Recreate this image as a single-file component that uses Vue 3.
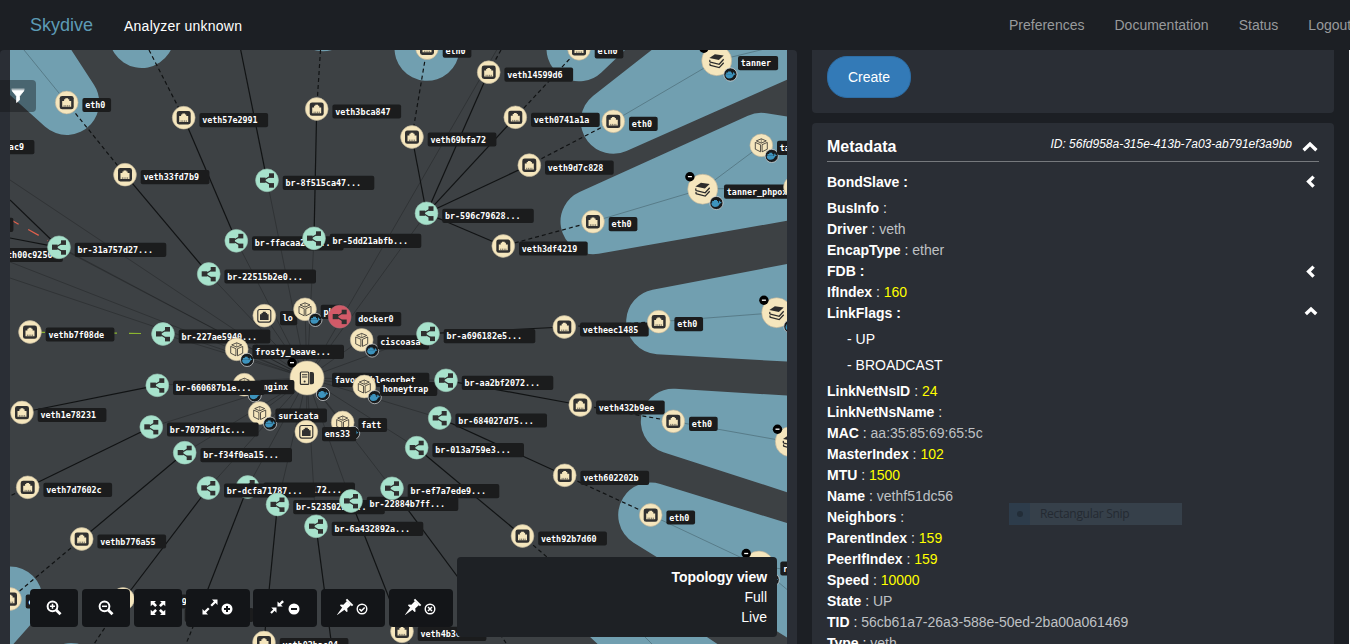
<script setup>
const bubbles = [
  { pts: '66.7,102.5 -20,-31 -90,-39' },
  { pts: '141.7,35.5 141.8,35' },
  { pts: '323,18.7 323.1,18' },
  { pts: '427,48.3 427.1,47' },
  { pts: '579,48.8 700,-66 640,-66' },
  { pts: '613.3,121.3 900,-6 800,-25' },
  { pts: '593,221.7 761.3,145.3 900,168' },
  { pts: '658.7,321.7 900,275.5 900,335.5' },
  { pts: '673.3,421.3 900,435 900,494.5' },
  { pts: '650.7,515 900,592 900,669' },
  { pts: '10,599 -80,700 -100,599' },
  { pts: '71,675.5 71.1,676' },
  { pts: '611,612 900,883 900,805' },
]

const host = [307, 378]
const faintTargets = [
  [59, 247.3], [267, 180.3], [236.3, 240.8], [208.7, 274], [314, 238.3], [426.5, 213.3], [428, 333.7],
  [446, 380.3], [439.7, 418], [416.7, 447.7], [392, 488.3], [351, 501], [316, 526.3], [277.5, 504.5],
  [247.7, 487], [208.3, 488], [184.7, 452.7], [151.3, 427], [157.3, 385.3], [163, 334], [496.7, 50],
  [10, 180], [10, 262], [10, 278], [47, 240], [264.3, 315.7], [305, 309], [361.3, 339.7], [364.3, 386.5],
  [342.7, 422.5], [306.3, 431.7], [259.7, 413], [244, 384.5], [236.7, 349.3],
]
const bubbleEdges = [
  [24, 50, 66.7, 102.5], [613.3, 121.3, 716.7, 60.7], [716.7, 60.7, 787, 43.5], [593, 221.7, 702.7, 189],
  [702.7, 189, 761.3, 145.3], [702.7, 189, 795, 187.5], [658.7, 321.7, 776.7, 312.7],
  [673.3, 421.3, 790, 442], [650.7, 515, 759, 566], [759, 566, 790, 570], [759, 566, 787, 589.5], [645, 637, 653, 645],
]
const solidEdges = [
  [125, 174.7, 208.7, 274], [183.7, 117.7, 236.3, 240.8], [240.7, 50, 267, 180.3], [316.7, 109, 314, 238.3],
  [412, 137, 426.5, 213.3], [488.7, 72, 426.5, 213.3], [515.3, 117.3, 426.5, 213.3], [529.3, 165, 426.5, 213.3],
  [503.3, 246, 426.5, 213.3], [428, 333.7, 564.3, 327], [446, 380.3, 580.3, 405], [439.7, 418, 564.7, 475.3],
  [416.7, 447.7, 522.5, 536], [392, 488.3, 500, 634], [351, 501, 402, 631], [316, 526.3, 331.5, 644],
  [277.5, 504.5, 264, 642], [247.7, 487, 199, 612], [208.3, 488, 124, 599], [184.7, 452.7, 81.7, 539],
  [151.3, 427, 27.7, 487.3], [157.3, 385.3, 22, 412.5], [10, 200, 59, 247.3], [10, 238, 59, 247.3],
]
const dashedEdges = [
  [66.7, 102.5, 125, 174.7], [149, 50, 183.7, 117.7], [320.5, 50, 316.7, 109], [427, 48, 412, 137],
  [501, 50, 488.7, 72], [579, 48.8, 515.3, 117.3], [613.3, 121.3, 529.3, 165], [593, 221.7, 503.3, 246],
  [564.3, 327, 658.7, 321.7], [580.3, 405, 673.3, 421.3], [564.7, 475.3, 650.7, 515], [81.7, 539, 10, 599],
  [27.7, 487.3, 10, 496], [522.5, 536, 611, 612], [124, 599, 94, 644], [199, 612, 186, 644],
  [500, 634, 506, 643], [402, 631, 410, 646],
]

const n = (kind, x, y, label, extra = {}) => ({ kind, x, y, label, dx: 15.7, dy: -4.6, ...extra })
const pod = (x, y, label) => n('cube', x, y, label, { docker: [10.4, 10.6] })
const ns = (x, y, label) => n('layers', x, y, label, { r: 15, dx: 21.3, dy: -4.6, docker: [13.7, 13.8], minus: [-12.8, -12.5] })

const nodes = [
  n('port', 66.7, 102.5, 'eth0'), n('port', 183.7, 117.7, 'veth57e2991'), n('port', 125, 174.7, 'veth33fd7b9'),
  n('port', -50, 144.7, 'veth81d2ac9'), n('port', -71, 222.3, 'vethc3a51d0'),
  n('port', 427, 48.1, 'eth0'), n('port', 488.7, 72.2, 'veth14599d6'), n('port', 316.7, 109, 'veth3bca847'),
  n('port', 412, 137, 'veth69bfa72'), n('port', 515.3, 117.3, 'veth0741a1a'), n('port', 529.3, 165.2, 'veth9d7c828'),
  n('bridge', 267, 180.3, 'br-8f515ca47...'), n('bridge', 426.5, 213.3, 'br-596c79628...'),
  n('port', 579, 48.8, 'eth0'), n('port', 613.3, 121.3, 'eth0'), ns(716.7, 60.7, 'tanner'),
  pod(761.3, 145.3, 'tanner_redis'), ns(702.7, 189.2, 'tanner_phpox'), n('cube', 795, 187, ''),
  n('port', 593, 221.7, 'eth0'), n('port', 503.3, 246, 'veth3df4219'),
  n('port', 564.3, 327, 'vetheec1485'), n('port', 658.7, 321.7, 'eth0'), ns(776.7, 312.7, 'heralding'),
  n('port', 580.3, 405, 'veth432b9ee'), n('port', 673.3, 421.3, 'eth0'), ns(790.3, 441.7, 'rdpy'),
  n('port', 564.7, 475.3, 'veth602202b'), n('port', 650.7, 515, 'eth0'), ns(759, 566, 'rdpy'),
  n('port', 522.5, 536, 'veth92b7d60'),
  n('port', -21.5, 252.5, 'veth00c9250'), n('bridge', 59, 247.3, 'br-31a757d27...'),
  n('bridge', 236.3, 240.8, 'br-ffacaa245...'), n('bridge', 208.7, 274, 'br-22515b2e0...'),
  n('bridge', 314, 238.3, 'br-5dd21abfb...'),
  n('port', 30, 332, 'vethb7f08de'), n('bridge', 163, 334, 'br-227ae5940...'),
  n('portline', 264.3, 315.7, 'lo'), pod(305, 309.3, 'pho'), n('bridge', 339.7, 316.7, 'docker0', { down: true }),
  pod(361.7, 339.9, 'ciscoasa'), n('bridge', 428, 333.7, 'br-a696182e5...'),
  pod(236.7, 349.3, 'frosty_beave...'),
  n('host', 307, 378, 'favourablesorbet', { r: 17, dx: 25, dy: -5.3, docker: [16, 16], minus: [-15, -15.3] }),
  pod(364.3, 386.5, 'honeytrap'), pod(244.3, 384.7, 'nginx'),
  n('bridge', 157.3, 385.3, 'br-660687b1e...'), n('port', 22, 412.5, 'veth1e78231'),
  pod(259.7, 413, 'suricata'), n('bridge', 446, 380.3, 'br-aa2bf2072...'),
  n('bridge', 151.3, 427, 'br-7073bdf1c...'), n('bridge', 439.7, 418, 'br-684027d75...'),
  n('bridge', 416.7, 447.7, 'br-013a759e3...'), pod(342.7, 422.5, 'fatt'), n('portline', 306.3, 431.7, 'ens33'),
  n('port', 27.7, 487.3, 'veth7d7602c'), n('bridge', 184.7, 452.7, 'br-f34f0ea15...'),
  n('bridge', 247.7, 487, 'br-40cb1e172...'), n('bridge', 208.3, 488, 'br-dcfa71787...'),
  n('bridge', 277.5, 504.5, 'br-523502b1c...', { dy: -4.4 }), n('bridge', 351, 501, 'br-22884b7ff...', { dy: -4.2 }),
  n('bridge', 392, 488.3, 'br-ef7a7ede9...', { dy: -4.2 }), n('bridge', 316, 526.3, 'br-6a432892a...'),
  n('port', 81.7, 539, 'vethb776a55'), n('port', 10, 599, 'eth0'), n('port', 123, 599, 'veth5e1a9nb'),
  n('port', 169, 612.5, 'veth8c02d1f'), n('port', 264, 642.5, 'veth02bac04'), n('port', 402, 631.3, 'veth4b3c9f1'),
]

const meta = [
  { k: 'BondSlave', group: 'left', tall: true },
  { k: 'BusInfo' },
  { k: 'Driver', v: 'veth' },
  { k: 'EncapType', v: 'ether' },
  { k: 'FDB', group: 'left' },
  { k: 'IfIndex', v: '160', num: true },
  { k: 'LinkFlags', group: 'up', items: ['UP', 'BROADCAST'] },
  { k: 'LinkNetNsID', v: '24', num: true },
  { k: 'LinkNetNsName' },
  { k: 'MAC', v: 'aa:35:85:69:65:5c' },
  { k: 'MasterIndex', v: '102', num: true },
  { k: 'MTU', v: '1500', num: true },
  { k: 'Name', v: 'vethf51dc56' },
  { k: 'Neighbors' },
  { k: 'ParentIndex', v: '159', num: true },
  { k: 'PeerIfIndex', v: '159', num: true },
  { k: 'Speed', v: '10000', num: true },
  { k: 'State', v: 'UP' },
  { k: 'TID', v: '56cb61a7-26a3-588e-50ed-2ba00a061469' },
  { k: 'Type', v: 'veth' },
]
const links = ['Preferences', 'Documentation', 'Status', 'Logout']
</script>

<template>
  <div class="app">
    <header class="navbar">
      <span class="brand">Skydive</span>
      <span class="analyzer">Analyzer unknown</span>
      <nav class="links"><a v-for="l in links" :key="l">{{ l }}</a></nav>
    </header>

    <main class="content">
      <section class="topology">
        <svg class="graph" width="777" height="594" viewBox="10 50 777 594">
          <defs>
            <g id="i-port">
              <rect x="-7" y="-6.6" width="14" height="13.4" rx="2.4" fill="#303030" />
              <path d="M-4.5 4.2V-1.6H-2.6V-3.2H-1.4V-4.2H1.4V-3.2H2.6V-1.6H4.5V4.2Z" fill="#f5e6bd" />
              <path d="M-2.6 4.2V2.6M-.9 4.2V2.6M.9 4.2V2.6M2.6 4.2V2.6" stroke="#303030" stroke-width=".6" />
            </g>
            <g id="i-portline">
              <rect x="-6.5" y="-6.2" width="13" height="12.6" rx="2" fill="none" stroke="#303030" stroke-width="1.1" />
              <path d="M-4.3 4.2V-1.4H-2.8V-2.8H-1.5V-4H1.5V-2.8H2.8V-1.4H4.3V4.2Z" fill="#303030" />
            </g>
            <g id="i-bridge">
              <path d="M5 -5L-3.5 0L5 5.2" fill="none" stroke="#303030" stroke-width="1.2" />
              <rect x="-7" y="-2.7" width="5.6" height="5.2" fill="#303030" />
              <rect x="2" y="-7" width="5" height="4.6" fill="#303030" />
              <rect x="2" y="2.8" width="5" height="4.6" fill="#303030" />
            </g>
            <g id="i-cube" fill="none" stroke="#3a3834" stroke-width=".85" stroke-linejoin="round">
              <path d="M0 -6.5L5 -4.4L0 -2.2L-5 -4.4Z" />
              <path d="M-6 -2.9L-.8 -.6V6.5L-6 3.9Z" />
              <path d="M6 -2.9L.8 -.6V6.5L6 3.9Z" />
              <path d="M0 -6.5V-2.2" stroke-width=".5" />
            </g>
            <g id="i-layers">
              <path d="M-7.3 -2.8L-1.8 -6.5L7 -5.2L2.2 -.8Z" fill="#2c2c2c" />
              <path d="M-6.8 -.8Q-7.4 1 -6.3 1.5L2.5 3.6L7 -1.5M-6.5 2.7Q-7.2 4.3 -6 4.8L2.5 6.9L7 2" fill="none" stroke="#2c2c2c" stroke-width="1.3" />
            </g>
            <g id="i-host">
              <rect x="-6.6" y="-6" width="8.4" height="12.4" rx="1" fill="none" stroke="#303030" stroke-width="1.2" />
              <path d="M-5 -3.3H.3M-5 -1H.3" stroke="#303030" stroke-width="1.1" />
              <circle cx="-2.4" cy="3.4" r="1" fill="#303030" />
              <path d="M3 -6H5Q7 -6 7 -4V4.5Q7 6.3 5 6.3H3Z" fill="#303030" />
            </g>
            <g id="i-docker">
              <circle r="6.6" fill="#171a1c" stroke="#dfe3e4" stroke-width=".7" />
              <path d="M-5 -.2H2.4Q2.2 -1.8 3.2 -2.6Q4 -2 3.9 -1Q4.9 -1.1 5.3 -.6Q4.7 .4 3.5 .4Q2.3 3.9 -1.6 3.9Q-5 3.9 -5 -.2Z" fill="#3d93bd" />
              <path d="M-4.2 -1.9H1.7V-.1H-4.2ZM-2.4 -3.1H.6V-1.9H-2.4Z" fill="#3d93bd" />
            </g>
          </defs>

          <g class="bubbles"><polygon v-for="(b, i) in bubbles" :key="i" :points="b.pts" /></g>
          <g class="faint">
            <line v-for="(t, i) in faintTargets" :key="i" :x1="host[0]" :y1="host[1]" :x2="t[0]" :y2="t[1]" />
          </g>
          <g class="inner">
            <line v-for="(e, i) in bubbleEdges" :key="i" :x1="e[0]" :y1="e[1]" :x2="e[2]" :y2="e[3]" />
          </g>
          <g class="solid">
            <line v-for="(e, i) in solidEdges" :key="i" :x1="e[0]" :y1="e[1]" :x2="e[2]" :y2="e[3]" />
          </g>
          <g class="dashed">
            <line v-for="(e, i) in dashedEdges" :key="i" :x1="e[0]" :y1="e[1]" :x2="e[2]" :y2="e[3]" />
          </g>
          <line class="alert" x1="12.5" y1="220.8" x2="48" y2="240.5" />
          <line class="active" x1="33" y1="332.3" x2="152" y2="333.6" />

          <g v-for="(d, i) in nodes" :key="i" :transform="`translate(${d.x} ${d.y})`">
            <circle :class="['disc', d.kind === 'bridge' ? 'green' : '', d.down ? 'red' : '']" :r="d.r || 11.4" />
            <use :href="'#i-' + d.kind" />
            <g v-if="d.minus" :transform="`translate(${d.minus[0]} ${d.minus[1]})`">
              <circle r="4.7" fill="#000" /><path d="M-2 0H2" stroke="#fff" stroke-width="1.3" />
            </g>
            <use v-if="d.docker" href="#i-docker" :x="d.docker[0]" :y="d.docker[1]" />
            <g v-if="d.label" :transform="`translate(${d.dx} ${d.dy})`">
              <rect class="tag" :width="d.label.length * 5.72 + 5.8" height="14.2" rx="2" />
              <text class="name" x="2.8" y="10.2">{{ d.label }}</text>
            </g>
          </g>
        </svg>

        <div class="filter">
          <svg width="14" height="15" viewBox="0 0 14 15"><path d="M.5 1.2H13.5M1 2.6H13L8.5 8.2V12L5.6 14.5V8.2Z" fill="#fff" stroke="#fff" stroke-width=".8" /></svg>
        </div>

        <div class="overlay">
          <div class="tools">
            <button><svg width="18" height="18" viewBox="0 0 18 18"><circle cx="7.5" cy="7.3" r="4.9" class="ring" /><path d="M11.2 11L15.5 15.3" class="thick" /><path d="M5 7.3H10M7.5 4.8V9.8" class="line" /></svg></button>
            <button><svg width="18" height="18" viewBox="0 0 18 18"><circle cx="7.5" cy="7.3" r="4.9" class="ring" /><path d="M11.2 11L15.5 15.3" class="thick" /><path d="M5 7.3H10" class="line" /></svg></button>
            <button><svg width="18" height="18" viewBox="0 0 18 18"><path d="M1.7 2H7L5.4 3.6L8 6.2L6.2 8L3.6 5.4L1.7 7.2ZM16.3 2V7.2L14.5 5.4L11.8 8L10 6.2L12.6 3.6L11 2ZM1.7 16V10.8L3.6 12.6L6.2 10L8 11.8L5.4 14.4L7 16ZM16.3 16H11L12.6 14.4L10 11.8L11.8 10L14.5 12.6L16.3 10.8Z" fill="#fff" /></svg></button>
            <button class="wide">
              <svg width="18" height="18" viewBox="0 0 18 18"><path d="M16.5 1.5V7L14.6 5.1L11 8.5L9.4 6.9L12.9 3.4L11 1.5ZM1.5 16.5V11L3.4 12.9L7 9.4L8.6 11L5.1 14.6L7 16.5Z" fill="#fff" /></svg>
              <svg width="12" height="12" viewBox="0 0 12 12"><circle cx="6" cy="6" r="5.5" fill="#fff" /><path d="M3 6H9M6 3V9" stroke="#131518" stroke-width="2" /></svg>
            </button>
            <button class="wide">
              <svg width="18" height="18" viewBox="0 0 18 18"><path d="M9.5 8.5V3.4L11.4 5.3L14.2 2.2L16 4L12.9 6.8L14.8 8.5ZM8.5 9.5V14.7L6.6 12.8L3.8 15.8L2.2 14.2L5.2 11.4L3.3 9.5Z" fill="#fff" /></svg>
              <svg width="12" height="12" viewBox="0 0 12 12"><circle cx="6" cy="6" r="5.5" fill="#fff" /><path d="M3 6H9" stroke="#131518" stroke-width="2" /></svg>
            </button>
            <button v-for="mark in ['M3.4 6L5.3 7.9L8.7 4.4', 'M4 4L8 8M8 4L4 8']" :key="mark" class="wide">
              <svg width="18" height="18" viewBox="0 0 18 18">
                <path d="M10.4 1.4L16.6 7.6" stroke="#fff" stroke-width="2" />
                <path d="M11 3L15 7L11.2 10.6L11.6 13.4L10.6 14L4 7.4L4.6 6.4L7.4 6.8Z" fill="#fff" />
                <path d="M6.4 9.2L8.8 11.6L1.2 17L1 16.8Z" fill="#fff" />
              </svg>
              <svg width="12" height="12" viewBox="0 0 12 12"><circle cx="6" cy="6" r="4.8" class="ring small" /><path :d="mark" class="line" /></svg>
            </button>
          </div>
          <div class="info"><b>Topology view</b><span>Full</span><span>Live</span></div>
        </div>
      </section>

      <aside class="side">
        <section class="card capture"><button class="create">Create</button></section>
        <section class="card metadata">
          <div class="head">
            <h2>Metadata</h2>
            <em>ID: 56fd958a-315e-413b-7a03-ab791ef3a9bb</em>
            <svg width="16" height="12" viewBox="0 0 16 12"><path d="M1.6 9.2L8 3L14.4 9.2" class="chev" /></svg>
          </div>
          <template v-for="m in meta" :key="m.k">
            <div :class="['row', { tall: m.tall }]">
              <b>{{ m.k }}<template v-if="m.group"> :</template></b>
              <template v-if="!m.group">&nbsp;<i>:</i>&nbsp;<span :class="{ num: m.num }">{{ m.v }}</span></template>
              <svg v-if="m.group === 'left'" class="arrow" width="12" height="14" viewBox="0 0 12 14"><path d="M8.6 1.6L3.6 6.6L8.6 11.6" class="chev" /></svg>
              <svg v-if="m.group === 'up'" class="arrow up" width="14" height="12" viewBox="0 0 14 12"><path d="M1.8 8L7 3L12.2 8" class="chev" /></svg>
            </div>
            <div v-if="m.items" class="items">
              <div v-for="it in m.items" :key="it" class="item">- {{ it }}</div>
            </div>
          </template>
        </section>
      </aside>
      <div class="edge"></div>
    </main>

    <div class="snip"><span class="dot"></span><span class="sniptext">Rectangular Snip</span></div>
  </div>
</template>

<style>
body { background: #1c1f24; }
</style>

<style scoped>
.app { position: relative; width: 1350px; height: 644px; overflow: hidden; background: #1c1f24; font: 14px/20px "Liberation Sans", Arial, sans-serif; color: #fff; display: flex; flex-direction: column; }
.navbar { height: 50px; flex: none; display: flex; align-items: center; box-sizing: border-box; padding-left: 30px; white-space: nowrap; }
.brand { font-size: 18px; color: #5d9bb5; width: 94px; flex: none; }
.analyzer { letter-spacing: .24px; padding-top: 2px; width: 119px; flex: none; }
.links { display: flex; gap: 30px; margin-left: 766px; color: #989a9c; }
.content { flex: 1; display: flex; min-height: 0; }
.topology { position: relative; width: 797px; flex: none; box-sizing: border-box; padding-left: 10px; background: #2a2e35; border-radius: 4px 4px 0 0; overflow: hidden; }
.graph { display: block; background: #3d4144; }
.bubbles polygon { fill: #719fb0; stroke: #719fb0; stroke-width: 65px; stroke-linejoin: round; }
.faint line { stroke: #000; stroke-opacity: .22; stroke-width: 1px; }
.inner line { stroke: #1f2a30; stroke-opacity: .3; stroke-width: 1px; }
.solid line { stroke: #111314; stroke-width: 1.2px; }
.dashed line { stroke: #111314; stroke-width: 1.2px; stroke-dasharray: 4 3; }
.alert { stroke: #e0604c; stroke-width: 1.2px; stroke-dasharray: 7 11 12 10; }
.active { stroke: #8bb52f; stroke-width: 1.2px; stroke-dasharray: 12 12; }
.disc { fill: #f5e6bd; stroke: #b9ae97; stroke-width: .6px; }
.green { fill: #a7e2cc; stroke: #93bdae; }
.red { fill: #d25a68; stroke: #a96b74; }
.tag { fill: #1b1c1d; }
.name { fill: #fff; font: bold 8.4px "DejaVu Sans Mono", monospace; }
.filter { position: absolute; left: 0; top: 30px; width: 36px; height: 32px; box-sizing: border-box; padding: 8px 0 0 11px; background: rgba(18, 22, 25, .42); border-radius: 0 4px 4px 0; line-height: 0; }
.overlay { position: absolute; left: 30px; bottom: 7px; width: 747px; display: flex; justify-content: space-between; align-items: flex-end; }
.tools { display: flex; gap: 3.85px; padding-bottom: 10px; }
.tools button { width: 48px; height: 38px; padding: 0; border: 0; border-radius: 4px; background: #131518; display: flex; align-items: center; justify-content: center; gap: 2px; }
.tools .wide { width: 64px; }
.wide svg:first-child { margin-top: -3px; }
.wide svg:last-child { margin-top: 1px; margin-right: 2px; }
.ring { fill: none; stroke: #fff; stroke-width: 2; }
.small { stroke-width: 1.4; }
.thick { stroke: #fff; stroke-width: 2.8; fill: none; }
.line { stroke: #fff; stroke-width: 1.5; fill: none; }
.info { width: 320px; height: 80px; box-sizing: border-box; padding: 10px; border-radius: 4px; background: #1e2125; display: flex; flex-direction: column; align-items: flex-end; }
.info b { letter-spacing: -.06px; }
.side { width: 522px; margin-left: 15px; display: flex; flex-direction: column; gap: 10px; }
.card { background: #2a2e35; border-radius: 4px; box-sizing: border-box; flex: none; }
.capture { height: 63px; border-radius: 0 0 4px 4px; padding: 6px 0 0 15px; }
.create { width: 84px; height: 42px; border: 1px solid #2e6da4; border-radius: 20px; background: #337ab7; color: #fff; font: inherit; padding: 0; }
.metadata { height: 540px; padding: 10px 15px 0; }
.head { height: 28px; display: flex; align-items: center; border-bottom: 1px solid #76797d; margin-bottom: 7px; }
h2 { margin: 0; font-size: 16px; line-height: 20px; flex: 1; }
.head em { font-size: 12px; padding-bottom: 7px; margin-right: 10px; }
.head svg { margin-right: 1px; }
.chev { fill: none; stroke: #fff; stroke-width: 3.4; }
.row { height: 21px; display: flex; align-items: center; line-height: 21px; color: #bfc1c4; white-space: pre; }
.tall { height: 29px; box-sizing: border-box; padding-bottom: 3px; }
.row b { color: #fff; }
.row i { font-style: normal; color: #e6e6e6; }
.row .num { color: #ff0; }
.arrow { margin-left: auto; margin-right: 2px; }
.up { margin-right: 1px; margin-bottom: 4px; }
.items { padding: 2px 0 3px 20px; }
.item { height: 26px; line-height: 26px; }
.edge { width: 1px; background: #fff; margin-left: auto; }
.snip { position: absolute; left: 1009px; top: 503px; width: 173px; height: 22px; background: linear-gradient(90deg, #2d3c4b 0 21px, #36404a 21px); display: flex; align-items: center; font: 12px/22px "Open Sans", "Noto Sans", sans-serif; color: #242a32; }
.dot { width: 6px; height: 6px; flex: none; border-radius: 50%; background: #222d38; margin: 0 17px 0 8px; }
.sniptext { white-space: nowrap; letter-spacing: -.3px; }
</style>
